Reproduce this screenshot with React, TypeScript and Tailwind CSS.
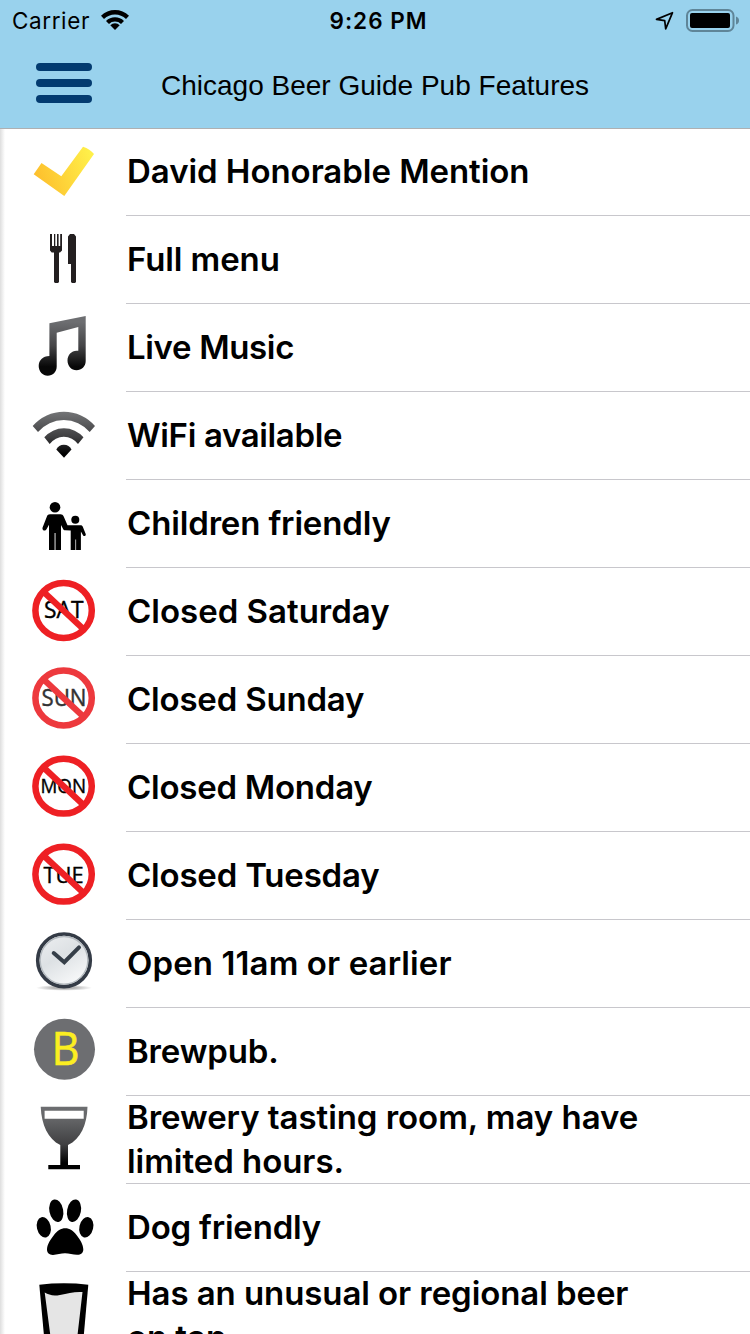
import type { ReactNode } from "react";

type Feature = {
  label: string;
  tracking: string;
  icon: ReactNode;
};

function ClosedDay({
  day,
  cy = 42,
  baseline,
  size,
  x,
  width,
  ring = "#ee2024",
  ink = "#000",
}: {
  day: string;
  cy?: number;
  baseline: number;
  size: number;
  x: number;
  width: number;
  ring?: string;
  ink?: string;
}) {
  return (
    <>
      <text
        x={x}
        y={baseline}
        fontSize={size}
        textLength={width}
        lengthAdjust="spacingAndGlyphs"
        fill={ink}
        stroke={ink}
        strokeWidth="0.4"
        className="font-['Open_Sans',sans-serif]"
      >
        {day}
      </text>
      <g fill="none" stroke={ring}>
        <ellipse cx="63.600" cy={cy} rx="28.200" ry="27.400" strokeWidth="6.500" />
        <path d={`M44.500 ${cy - 17.8} L82.500 ${cy + 17.8}`} strokeWidth="6.300" />
      </g>
    </>
  );
}

const features: Feature[] = [
  {
    label: "David Honorable Mention",
    tracking: "tracking-[-0.05px]",
    icon: (
      <>
        <linearGradient id="gold" x1="0" x2="1" y1="0.6" y2="0.3">
          <stop offset="0" stopColor="#fdbe2c" />
          <stop offset="1" stopColor="#fff04a" />
        </linearGradient>
        <path
          d="M41.500 35 L33.700 46.300 L64.300 68 L94 26 Q90 21 83 18.700 L61.300 48.200 Z"
          fill="url(#gold)"
        />
      </>
    ),
  },
  {
    label: "Full menu",
    tracking: "tracking-[-0.1px]",
    icon: (
      <g fill="#231f20">
        <path d="M50 18h2v12h2V18h1.300v12h1.700V18h1.600v12h1.600V18H62v16.500l-2 2h-1V66l-1 1h-3l-1-1V36.500h-2.300l-1.700-2z" />
        <path d="M68 20.500l2-2.500h4l2 2.500V66l-1 1h-3l-1-1V48h-3z" />
      </g>
    ),
  },
  {
    label: "Live Music",
    tracking: "tracking-[-0.35px]",
    icon: (
      <>
        <linearGradient id="note" x1="0" x2="0" y1="0" y2="1">
          <stop offset="0.1" stopColor="#6d6e71" />
          <stop offset="0.5" stopColor="#454547" />
          <stop offset="0.85" stopColor="#080808" />
        </linearGradient>
        <path
          d="M49.400 19.300 L85.700 12 V57 C85.700 62.500 81.500 66.300 76.500 66.300 S67.500 62 67.500 56.500 S71.500 46.700 76.500 46.700 H78.300 V23 L56.700 28.700 V62.500 C56.700 68 52.700 71.700 47.700 71.700 S38.700 67.500 38.700 62 S42.700 52 49.400 52 Z"
          fill="url(#note)"
        />
      </>
    ),
  },
  {
    label: "WiFi available",
    tracking: "tracking-[-0.35px]",
    icon: (
      <>
        <linearGradient
          id="wifi"
          gradientUnits="userSpaceOnUse"
          x1="0"
          x2="0"
          y1="20"
          y2="62"
        >
          <stop offset="0" stopColor="#737476" />
          <stop offset="0.6" stopColor="#3e3e40" />
          <stop offset="1" stopColor="#000" />
        </linearGradient>
        <g fill="url(#wifi)">
          <path d="M32.700 34 A41.100 41.100 0 0 1 95 34 L89.700 40 A33.800 33.800 0 0 0 38 40 Z" />
          <path d="M44.300 45.300 A25.800 25.800 0 0 1 83.500 45.300 L78 52 A17.400 17.400 0 0 0 49.700 52 Z" />
          <path d="M56.300 57.500 A8.400 8.400 0 0 1 71.500 57.500 L64 65.700 Z" />
        </g>
      </>
    ),
  },
  {
    label: "Children friendly",
    tracking: "tracking-[-0.15px]",
    icon: (
      <g>
        <circle cx="55" cy="27.200" r="5.300" />
        <circle cx="75.300" cy="39.700" r="4" />
        <path d="M50 34.300h10.500c1.500 0 2.500.8 3.200 2.200l3.800 8.700h13c1 0 1.700.5 2.200 1.300l3 7.500c.6 1.800-1.700 3-2.700 1.200l-2.100-3.700V70h-4.800V59.500h-.7V70H70.700V50.500l-5.500-.3c-1 0-1.700-.5-2.200-1.500l-2-3.800V70h-5.500V53h-.9v17H49V44.700l-2.500 4.600c-1.300 2.300-4.600 1.200-4-1.600l4.300-11c.6-1.600 1.700-2.400 3.200-2.400z" />
      </g>
    ),
  },
  {
    label: "Closed Saturday",
    tracking: "tracking-normal",
    icon: (
      <ClosedDay day="SAT" cy={42.500} baseline={49.500} size={24} x={44} width={39.500} />
    ),
  },
  {
    label: "Closed Sunday",
    tracking: "tracking-[-0.2px]",
    icon: (
      <ClosedDay
        day="SUN"
        baseline={49.800}
        size={22.800}
        x={41.500}
        width={45}
        ring="#ed393d"
        ink="#333"
      />
    ),
  },
  {
    label: "Closed Monday",
    tracking: "tracking-[-0.25px]",
    icon: <ClosedDay day="MON" cy={42.200} baseline={49.300} size={20.500} x={40.500} width={45.500} />,
  },
  {
    label: "Closed Tuesday",
    tracking: "tracking-[-0.2px]",
    icon: <ClosedDay day="TUE" cy={42.200} baseline={50.700} size={22.400} x={43.500} width={40} />,
  },
  {
    label: "Open 11am or earlier",
    tracking: "tracking-[0.1px]",
    icon: (
      <>
        <linearGradient id="face" x1="0" x2="0.6" y1="0" y2="1">
          <stop offset="0" stopColor="#eef0f2" />
          <stop offset="0.5" stopColor="#dde1e4" />
          <stop offset="1" stopColor="#f7f8f9" />
        </linearGradient>
        <radialGradient id="ground">
          <stop offset="0.4" stopColor="#b5b5b5" />
          <stop offset="1" stopColor="#fff" />
        </radialGradient>
        <ellipse cx="64" cy="67.800" rx="28" ry="3" fill="url(#ground)" />
        <circle cx="64" cy="40.300" r="26.300" fill="url(#face)" stroke="#343b46" strokeWidth="3.600" />
        <circle cx="64" cy="40.300" r="23.800" fill="none" stroke="#b4babf" strokeWidth="1.300" />
        <path
          d="M53.700 33 L64.300 42.200 L79 27.300"
          fill="none"
          stroke="#363f49"
          strokeWidth="4"
          strokeLinecap="round"
        />
      </>
    ),
  },
  {
    label: "Brewpub.",
    tracking: "tracking-[-0.15px]",
    icon: (
      <>
        <circle cx="64.500" cy="41.300" r="30.500" fill="#6d6e71" />
        <text
          x="51.500"
          y="57.400"
          fontSize="46.500"
          fill="#fcee21"
          stroke="#fcee21"
          strokeWidth="0.600"
          textLength="28"
          lengthAdjust="spacingAndGlyphs"
          className="font-['Open_Sans',sans-serif]"
        >
          B
        </text>
      </>
    ),
  },
  {
    label: "Brewery tasting room, may have limited hours.",
    tracking: "tracking-[-0.05px]",
    icon: (
      <>
        <linearGradient id="goblet" x1="0" x2="0" y1="0" y2="1">
          <stop offset="0" stopColor="#6d6e71" />
          <stop offset="0.2" stopColor="#646567" />
          <stop offset="0.6" stopColor="#404042" />
          <stop offset="0.9" stopColor="#000" />
        </linearGradient>
        <path
          d="M40.700 10.700 H87.500 C87 29 80.500 43 68 49 V69 H80 V73.300 H48.300 V69 H60.300 V49 C48 43 41.500 29 40.700 10.700 Z"
          fill="url(#goblet)"
        />
        <path d="M44.600 14.700 H83.700 V22.700 H44.600 Z" fill="#fff" />
      </>
    ),
  },
  {
    label: "Dog friendly",
    tracking: "tracking-[-0.2px]",
    icon: (
      <g>
        <ellipse cx="56.300" cy="26.700" rx="6.900" ry="11.400" transform="rotate(-11 56.300 26.700)" />
        <ellipse cx="74" cy="26.700" rx="6.900" ry="11.400" transform="rotate(11 74 26.700)" />
        <ellipse cx="43.800" cy="43.300" rx="6.900" ry="10.400" transform="rotate(-13 43.800 43.300)" />
        <ellipse cx="86.300" cy="43.300" rx="6.900" ry="10.400" transform="rotate(13 86.300 43.300)" />
        <path d="M65.300 44.300 C69.500 44.300 73.500 47 76.500 51 C80 55.500 83.300 60.500 83.300 65.500 C83.300 69 80.500 71 77 70.800 C73 70.600 69 69.300 65 69.300 S57 70.800 53 70.900 C49.500 71 47 69 47 65.500 C47 60.500 50.500 55.500 54 51 C57 47 61 44.300 65.300 44.300 Z" />
      </g>
    ),
  },
  {
    label: "Has an unusual or regional beer on tap.",
    tracking: "tracking-[-0.08px]",
    icon: (
      <>
        <path d="M39.300 12.700 Q64 10 88.300 12.700 L82.300 80 H45.500 Z" />
        <path
          d="M44.700 20.600 C49 23 53 24.300 60 23 C68 21.400 74 19.500 82.500 20 L76 76 H52 Z"
          fill="#e5e5e5"
        />
      </>
    ),
  },
];

function StatusBar() {
  return (
    <div className="flex h-10 items-center text-[22.500px] leading-10 font-['Inter',sans-serif]">
      <div className="flex flex-1 items-center pl-3">
        <span className="w-[89px] pt-0.5 tracking-[0.6px]">Carrier</span>
        <svg width="28" height="20" viewBox="0 0 28 20">
          <path d="M0 5.800 A20 20 0 0 1 28 5.800 L25 8.900 A15.700 15.700 0 0 0 3 8.900 Z" />
          <path d="M5 10.900 A13 13 0 0 1 23 10.900 L20 14 A8.700 8.700 0 0 0 8 14 Z" />
          <path d="M9.300 15.200 A6.800 6.800 0 0 1 18.700 15.200 L14 19.900 Z" />
        </svg>
      </div>
      <span className="pt-0.5 pl-[5px] font-semibold tracking-[1px]">9:26 PM</span>
      <div className="flex flex-1 items-center justify-end pr-2.5">
        <svg width="85" height="24" viewBox="655 8 85 24">
          <path
            d="M672.500 12.700 L656.500 19.400 L664.700 20.600 L665.700 28.800 Z"
            fill="none"
            stroke="#000"
            strokeWidth="1.700"
            strokeLinejoin="round"
          />
          <rect x="687" y="10" width="46.500" height="21" rx="5.500" fill="none" stroke="#5f8598" strokeWidth="2" />
          <rect x="690" y="13" width="40" height="15" rx="2" />
          <path d="M736 16.500 Q739 17.500 739 20.500 T736 24.500 Z" fill="#5f8598" />
        </svg>
      </div>
    </div>
  );
}

function NavBar() {
  return (
    <div className="flex h-[88px] items-center">
      <button className="ml-9 flex h-[88px] w-[125px] flex-col gap-2 pt-[23px]" aria-label="Menu">
        <span className="h-2 w-14 rounded-full bg-[#033b70]" />
        <span className="h-2 w-14 rounded-full bg-[#033b70]" />
        <span className="h-2 w-14 rounded-full bg-[#033b70]" />
      </button>
      <h1 className="pt-1 text-[28px] whitespace-nowrap font-['Liberation_Sans',sans-serif]">
        Chicago Beer Guide Pub Features
      </h1>
    </div>
  );
}

function FeatureRow({ label, tracking, icon }: Feature) {
  return (
    <li className="flex h-[88px]">
      <svg className="shrink-0" width="126" height="88" viewBox="0 0 126 88">
        {icon}
      </svg>
      <div className="flex flex-1 items-center border-b border-[#c8c7cc] pb-px pl-px">
        <span className={`max-w-[530px] text-[33px] leading-[44px] font-semibold ${tracking}`}>
          {label}
        </span>
      </div>
    </li>
  );
}

export default function App() {
  return (
    <div className="relative h-[1334px] w-[750px] overflow-hidden bg-white text-black">
      <header className="relative z-10 h-32 bg-[#99d2ed] shadow-[0_1px_0_#aeb0b2]">
        <StatusBar />
        <NavBar />
      </header>
      <ul className="font-['Inter',sans-serif]">
        {features.map((feature) => (
          <FeatureRow key={feature.label} {...feature} />
        ))}
      </ul>
      <div className="absolute top-32 bottom-0 left-0 w-[5px] bg-linear-to-r from-[#dedede] to-transparent" />
    </div>
  );
}
